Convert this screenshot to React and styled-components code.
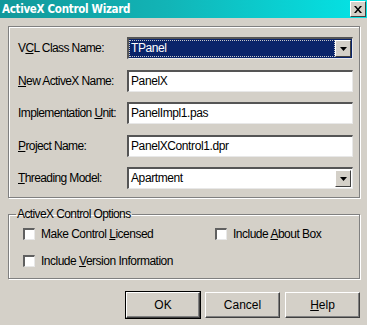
import React from 'react';
import styled, { createGlobalStyle } from 'styled-components';

const GlobalStyle = createGlobalStyle`
    html, body {
        margin: 0;
        padding: 0;
        background: #d4d0c8;
    }
    body {
        font-family: "Liberation Sans", Arial, sans-serif;
        font-size: 12px;
        color: #000;
    }
`;

function App() {

    const field = (label, key, value, combo, selected) => (
        <React.Fragment key={label}>
            <Label>
                {label.slice(0, label.indexOf(key))}
                <u>{key}</u>
                {label.slice(label.indexOf(key) + 1)}
            </Label>
            <Edit selected={selected}>
                <EditText selected={selected}>{value}</EditText>
                {combo && (
                    <DropButton>
                        <svg width="7" height="4" viewBox="0 0 7 4">
                            <path d="M0 0h7L3.5 4z" fill="#000" />
                        </svg>
                    </DropButton>
                )}
            </Edit>
        </React.Fragment>
    )

    const check = (label, key) => (
        <Check>
            <Box />
            <span>
                {label.slice(0, label.indexOf(key))}
                <u>{key}</u>
                {label.slice(label.indexOf(key) + 1)}
            </span>
        </Check>
    )

    return (
        <Window>
            <GlobalStyle />
            <TitleBar>
                <h1>ActiveX Control Wizard</h1>
                <CloseButton>
                    <svg width="8" height="7" viewBox="0 0 8 7">
                        <path d="M0 0h2l2 2.4L6 0h2L5 3.5 8 7H6L4 4.6 2 7H0l3-3.5z" fill="#000" />
                    </svg>
                </CloseButton>
            </TitleBar>

            <Body>
                <Group>
                    {field("VCL Class Name:", "C", "TPanel", true, true)}
                    {field("New ActiveX Name:", "N", "PanelX")}
                    {field("Implementation Unit:", "U", "PanelImpl1.pas")}
                    {field("Project Name:", "P", "PanelXControl1.dpr")}
                    {field("Threading Model:", "T", "Apartment", true)}
                </Group>

                <Options>
                    <legend>ActiveX Control Options</legend>
                    <CheckGrid>
                        {check("Make Control Licensed", "L")}
                        {check("Include About Box", "A")}
                        {check("Include Version Information", "V")}
                    </CheckGrid>
                </Options>

                <Buttons>
                    <Button primary>OK</Button>
                    <Button>Cancel</Button>
                    <Button><u>H</u>elp</Button>
                </Buttons>
            </Body>
        </Window>
    )
}

const Window = styled.div`
    width: 367px;
    height: 325px;
    overflow: hidden;
    background: #d4d0c8;
`;

const TitleBar = styled.div`
    display: flex;
    align-items: center;
    justify-content: space-between;
    height: 18px;
    padding: 0 1px 0 2px;
    background: linear-gradient(90deg, #12989a 0%, #12b4b6 45%, #04e4e6 100%);

    & > h1 {
        margin: 0;
        font-family: "DejaVu Sans Condensed", "Liberation Sans", sans-serif;
        font-stretch: condensed;
        font-size: 11.5px;
        font-weight: 700;
        letter-spacing: -0.3px;
        color: #fff;
    }
`;

const CloseButton = styled.div`
    display: flex;
    align-items: center;
    justify-content: center;
    width: 14px;
    height: 14px;
    background: #d4d0c8;
    border-top: 1px solid #fff;
    border-left: 1px solid #fff;
    border-right: 1px solid #404040;
    border-bottom: 1px solid #404040;
`;

const Body = styled.div`
    padding: 8px 7px 0 8px;
`;

const Group = styled.div`
    display: grid;
    grid-template-columns: 109px 1fr;
    row-gap: 10.5px;
    align-items: center;
    padding: 10px 6px 8px 9px;
    border: 1px solid #808080;
    box-shadow: inset 1px 1px 0 #fff, 1px 1px 0 #fff;
`;

const Label = styled.span`
    white-space: nowrap;
    letter-spacing: -0.6px;
`;

const Edit = styled.div`
    display: flex;
    align-items: center;
    height: 17px;
    padding: 1px;
    background: ${p => p.selected ? '#0a246a' : '#fff'};
    border-top: 2px solid #555;
    border-left: 2px solid #555;
    border-right: 1px solid #e8e8e8;
    border-bottom: 1px solid #e8e8e8;
`;

const EditText = styled.span`
    flex: 1;
    height: 15px;
    line-height: 15px;
    padding-left: 1px;
    color: ${p => p.selected ? '#fff' : '#000'};
    outline: ${p => p.selected ? '1px dotted #c8c8c8' : 'none'};
    letter-spacing: -0.4px;
    margin-right: 1px;
`;

const DropButton = styled.div`
    display: flex;
    align-items: center;
    justify-content: center;
    width: 16px;
    height: 17px;
    background: #d4d0c8;
    border-top: 1px solid #fff;
    border-left: 1px solid #fff;
    border-right: 1px solid #404040;
    border-bottom: 1px solid #404040;
    box-sizing: border-box;
`;

const Options = styled.fieldset`
    margin: 9px 0 0;
    padding: 0;
    border: 1px solid #808080;
    box-shadow: inset 1px 1px 0 #fff, 1px 1px 0 #fff;

    & > legend {
        padding: 0 1px;
        margin-left: 7px;
        letter-spacing: -0.6px;
    }
`;

const CheckGrid = styled.div`
    display: grid;
    grid-template-columns: 192px 1fr;
    row-gap: 13px;
    padding: 6px 6px 10px 14px;
`;

const Check = styled.label`
    display: flex;
    align-items: center;
    gap: 6px;
    letter-spacing: -0.5px;
`;

const Box = styled.span`
    width: 9px;
    height: 9px;
    background: #fff;
    border-top: 2px solid #606060;
    border-left: 2px solid #606060;
    border-right: 1px solid #e8e8e8;
    border-bottom: 1px solid #e8e8e8;
`;

const Buttons = styled.div`
    display: flex;
    justify-content: flex-end;
    gap: 5px;
    padding-top: 13px;
`;

const Button = styled.button`
    width: ${p => p.primary ? '74px' : '75px'};
    height: 26px;
    font-family: "Liberation Sans", Arial, sans-serif;
    font-size: 12px;
    color: #000;
    background: #d4d0c8;
    border-top: 1px solid #fff;
    border-left: 1px solid #fff;
    border-right: 1px solid #404040;
    border-bottom: 1px solid #404040;
    box-shadow: inset -1px -1px 0 #808080;
    outline: ${p => p.primary ? '1px solid #000' : 'none'};
    padding: 0;
`;

export default App
